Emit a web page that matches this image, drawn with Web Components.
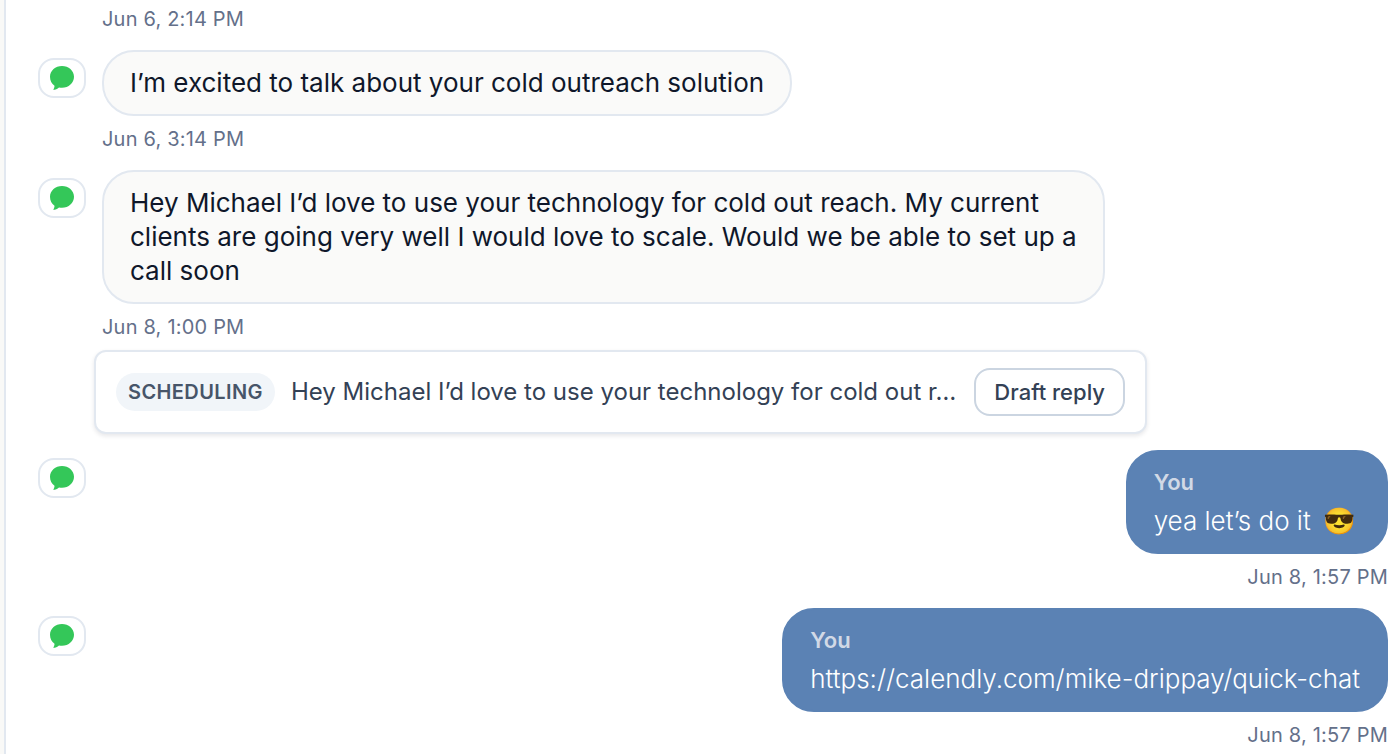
<!DOCTYPE html>
<html lang="en">
<head>
<meta charset="utf-8">
<meta name="viewport" content="width=device-width, initial-scale=1">
<title>Conversation</title>
<style>
  html { background: #f9f9f7; }
  body { margin: 0; font-family: Inter, "Liberation Sans", sans-serif; color: #0f172a; }
</style>
</head>
<body>
<chat-thread>
  <chat-time>Jun 6, 2:14 PM</chat-time>
  <chat-message time="Jun 6, 3:14 PM">I’m excited to talk about your cold outreach solution</chat-message>
  <chat-message time="Jun 8, 1:00 PM">Hey Michael I’d love to use your technology for cold out reach. My current clients are going very well I would love to scale. Would we be able to set up a call soon</chat-message>
  <chat-suggestion label="Scheduling">Hey Michael I’d love to use your technology for cold out r…</chat-suggestion>
  <chat-message own time="Jun 8, 1:57 PM">yea let’s do it <chat-emoji>😎</chat-emoji></chat-message>
  <chat-message own time="Jun 8, 1:57 PM"><a href="https://calendly.com/mike-drippay/quick-chat" style="color:inherit;text-decoration:none">https://calendly.com/mike-drippay/quick-chat</a></chat-message>
</chat-thread>

<template id="thread">
  <style>
    :host { display: block; margin-left: 4px; border-left: 2px solid #e2e8f0; background: #fff; min-height: 100vh; box-sizing: border-box; }
    main { display: flex; flex-direction: column; gap: 16px; padding: 4px 8px 4px 32px; }
    ::slotted(chat-time) { margin-left: 64px; }
    ::slotted(chat-suggestion) { margin: -8px 0 0 56px; }
  </style>
  <main><slot></slot></main>
</template>

<template id="time">
  <style>
    :host { display: block; font-size: 20px; line-height: 30px; letter-spacing: 0.01em; color: #64708a; }
  </style>
  <slot></slot>
</template>

<template id="emoji">
  <style>
    :host { display: inline-block; width: 42px; text-align: center; }
  </style>
  <slot></slot>
</template>

<template id="channel">
  <style>
    :host { display: flex; align-items: center; justify-content: center; flex: none; box-sizing: border-box; width: 48px; height: 40px; border: 2px solid #e2e8f0; border-radius: 16px; background: #fff; }
    svg { display: block; width: 24px; height: 24px; }
  </style>
  <svg viewBox="0 0 24 24" role="img" aria-label="iMessage"><path fill="#34c759" d="M12 0C5.400 0 0 4.700 0 10.700c0 4.100 1.700 7 4.500 9 .1 1.400-.5 2.900-1.400 4.100 2.400 0 4.300-1.100 5.900-2.400.9.200 2 .3 3 .3 6.600 0 12-4.900 12-11S18.600 0 12 0z"/></svg>
</template>

<template id="message">
  <style>
    :host { display: flex; align-items: flex-start; gap: 16px; }
    chat-channel { margin-top: 8px; }
    .body { flex: 1; min-width: 0; display: flex; flex-direction: column; align-items: flex-start; gap: 8px; }
    .bubble { box-sizing: border-box; max-width: 78%; padding: 14px 26px; border: 2px solid #e2e8f0; border-radius: 32px; background: #fafaf9; font-size: 26px; line-height: 34px; overflow-wrap: anywhere; }
    .who { display: none; margin-bottom: 6px; font-size: 22px; line-height: 32px; font-weight: 600; color: #d1d9e6; }
    :host([own]) .body { align-items: flex-end; }
    :host([own]) .bubble { background: #5b82b4; border-color: #5b82b4; color: #fff; font-weight: 300; }
    :host([own]) .who { display: block; }
  </style>
  <chat-channel></chat-channel>
  <div class="body">
    <div class="bubble"><div class="who">You</div><slot></slot></div>
    <chat-time></chat-time>
  </div>
</template>

<template id="suggestion">
  <style>
    :host { display: flex; align-items: center; gap: 16px; box-sizing: border-box; width: 78%; padding: 16px 20px; border: 2px solid #e2e8f0; border-radius: 12px; background: #fff; box-shadow: 0 2px 4px rgba(15, 23, 42, 0.1); }
    .tag { flex: none; padding: 4px 12px; border-radius: 19px; background: #f1f5f9; color: #475569; font-size: 20px; line-height: 30px; font-weight: 600; letter-spacing: 0.02em; text-transform: uppercase; }
    .preview { flex: 1; min-width: 0; white-space: nowrap; font-size: 24px; line-height: 36px; color: #334155; }
    button { flex: none; padding: 6px 18px; border: 2px solid #cbd5e1; border-radius: 16px; background: #fff; color: #334155; font: 500 22px/32px Inter, "Liberation Sans", sans-serif; cursor: pointer; }
  </style>
  <span class="tag"></span>
  <span class="preview"><slot></slot></span>
  <button type="button">Draft reply</button>
</template>

<script>
  class ChatElement extends HTMLElement {
    constructor() {
      super();
      const template = document.getElementById(this.constructor.template);
      this.attachShadow({ mode: "open" }).append(document.importNode(template.content, true));
    }
  }
  class ChatTime extends ChatElement { static template = "time"; }
  class ChatEmoji extends ChatElement { static template = "emoji"; }
  class ChatChannel extends ChatElement { static template = "channel"; }
  class ChatThread extends ChatElement { static template = "thread"; }
  class ChatMessage extends ChatElement {
    static template = "message";
    connectedCallback() {
      if (!this.hasAttribute("own")) this.shadowRoot.querySelector(".who")?.remove();
      this.shadowRoot.querySelector("chat-time").textContent = this.getAttribute("time");
    }
  }
  class ChatSuggestion extends ChatElement {
    static template = "suggestion";
    connectedCallback() {
      this.shadowRoot.querySelector(".tag").textContent = this.getAttribute("label");
    }
  }
  customElements.define("chat-time", ChatTime);
  customElements.define("chat-emoji", ChatEmoji);
  customElements.define("chat-channel", ChatChannel);
  customElements.define("chat-message", ChatMessage);
  customElements.define("chat-suggestion", ChatSuggestion);
  customElements.define("chat-thread", ChatThread);
</script>
</body>
</html>
